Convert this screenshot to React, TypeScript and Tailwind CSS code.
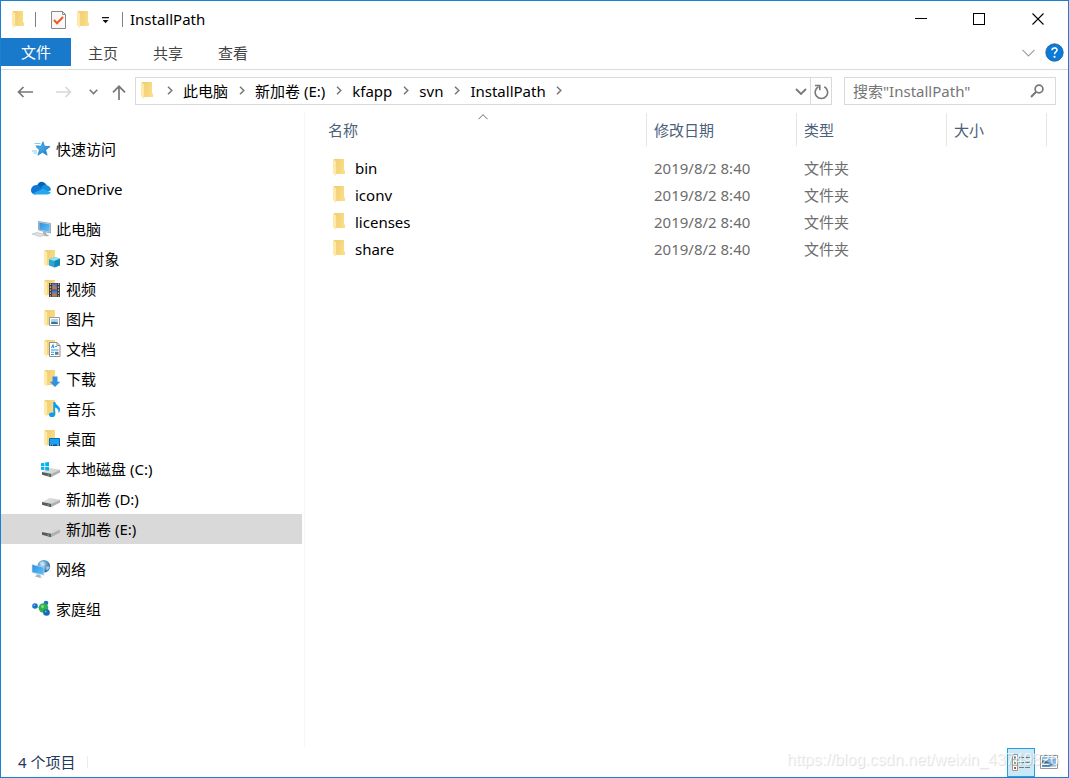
import React, { useState } from "react";

type IconProps = { className?: string };

function FolderShape() {
  return (
    <>
      <path d="M1 0h10v11.5h1V15H3z" fill="url(#folderBack)" />
      <path d="M0 0l3.2 2.4V17L0 14.2z" fill="#ffe9a8" />
    </>
  );
}

function FolderIcon({ className = "" }: IconProps) {
  return (
    <svg className={`shrink-0 ${className}`} width="13" height="17" viewBox="0 0 13 17" aria-hidden="true">
      <FolderShape />
    </svg>
  );
}

function Gradients() {
  return (
    <svg width="0" height="0" className="absolute" aria-hidden="true">
      <defs>
        <linearGradient id="folderBack" x1="0" x2="1" y1="0" y2="0.3">
          <stop offset="0" stopColor="#edca70" />
          <stop offset="1" stopColor="#fbdd85" />
        </linearGradient>
        <linearGradient id="screenBlue" x1="0" x2="1" y1="0" y2="1">
          <stop offset="0" stopColor="#2b8fe0" />
          <stop offset="1" stopColor="#63c4fb" />
        </linearGradient>
        <linearGradient id="starBlue" x1="0" x2="1" y1="0" y2="1">
          <stop offset="0" stopColor="#5cc4fa" />
          <stop offset="1" stopColor="#1578c8" />
        </linearGradient>
        <radialGradient id="globe" cx="0.4" cy="0.35" r="0.7">
          <stop offset="0" stopColor="#bfe0f2" />
          <stop offset="0.5" stopColor="#5b9cc7" />
          <stop offset="1" stopColor="#2a6492" />
        </radialGradient>
        <linearGradient id="driveTop" x1="0" x2="1" y1="0" y2="0">
          <stop offset="0" stopColor="#e2e2e2" />
          <stop offset="1" stopColor="#cfcfcf" />
        </linearGradient>
      </defs>
    </svg>
  );
}

function TreeIcon({ children }: { children: React.ReactNode }) {
  return (
    <svg className="shrink-0" width="22" height="20" viewBox="0 0 22 20" aria-hidden="true">
      {children}
    </svg>
  );
}

function TreeFolder({ children }: { children: React.ReactNode }) {
  return (
    <TreeIcon>
      <g transform="translate(4 1)">
        <FolderShape />
      </g>
      {children}
    </TreeIcon>
  );
}

function Drive() {
  return (
    <>
      <path d="M2 13L9.500 9 20 10.700 11 14.800z" fill="url(#driveTop)" />
      <path d="M2 13l9 1.800v3.500L2 15.800z" fill="#5a5a5a" />
      <path d="M11 14.800l9-4.100v2.800l-9 4.800z" fill="#b0b0b0" />
      <path d="M7.300 15.200l1.800.4v1.300l-1.800-.4z" fill="#35d04a" />
    </>
  );
}

const icons = {
  star: (
    <TreeIcon>
      <path d="M13 2.800l1.500 4.500 5.600.3-4.500 3.300 1.500 5.300-4.600-3-4.600 3 1.600-5.300-3.300-3.200 4.800-.4z" fill="url(#starBlue)" stroke="#1a79c4" strokeWidth="0.7" />
      <path d="M4.500 4.500h6M5.500 6.500h4M2 12h5M3.500 14h3.500" stroke="#7cc4ee" strokeWidth="0.9" />
    </TreeIcon>
  ),
  cloud: (
    <TreeIcon>
      <path d="M6.800 7.300C8 3 12.500 .600 16.200 5.500L12 11z" fill="#0363b8" />
      <path d="M5.200 15.500C2.800 15.500 1 13.700 1 11.500 1 9 3.300 6 6.200 6.100c2.300 0 4.100 2 7.300 4.300z" fill="#0f78d4" />
      <path d="M11 9c1.500-3 5-4.500 6.300-2.500 2.300.6 3.700 2.600 3.700 4.700l-4 1.600z" fill="#1490df" />
      <path d="M3 14.500l9.500-4.700 8.200 3.500c-.5 1.500-1.700 2.200-3.300 2.200H5.500c-1 0-2-.4-2.500-1z" fill="#28a8ea" />
    </TreeIcon>
  ),
  pc: (
    <TreeIcon>
      <path d="M8.500 2.500L20.500 4.500v9.500l-12-3z" fill="#e2e6ea" stroke="#6d7a86" strokeWidth="0.6" />
      <path d="M9.300 3.400l10.400 1.800v7.800L9.300 10.400z" fill="url(#screenBlue)" />
      <path d="M13 12.500l3.500.9v2l3 .8-2.500 1.200-6-1.500 2-.8z" fill="#a9b3bc" />
      <path d="M2 15l5-1.500 8 1.800-4.500 2.400z" fill="#dde1e5" stroke="#b2bac2" strokeWidth="0.6" />
    </TreeIcon>
  ),
  objects: (
    <TreeFolder>
      <path d="M9 10.300l6-2.300 5 1.700v6.500l-5.500 2.300-5.500-2z" fill="#2aa7d0" />
      <path d="M9 10.300l6-2.300 5 1.700-5.500 2.300z" fill="#8fe4f4" />
      <path d="M14.500 12l5.500-2.300v6.500l-5.500 2.300z" fill="#1387b6" />
    </TreeFolder>
  ),
  video: (
    <TreeFolder>
      <path d="M9 4h11v14H9z" fill="#3c3c3c" />
      <path d="M12 4.500h5v6h-5z" fill="#5c6fce" />
      <path d="M12 11.500h5v6h-5z" fill="#3f80d8" />
      <path d="M12 8l2.500-2L17 9v1.500h-5zM12 15l2.500-1.500 2.500 2v2h-5z" fill="#bb784c" />
      <path d="M10.500 4.500v13M18.500 4.500v13" stroke="#d8d8d8" strokeWidth="1.200" strokeDasharray="1.200 1.800" />
    </TreeFolder>
  ),
  picture: (
    <TreeFolder>
      <path d="M9.500 8.500h10v8h-10z" fill="#fff" stroke="#9a9a9a" />
      <path d="M11 10h7v5h-7z" fill="#a8d2f1" />
      <path d="M11 13.500c2-1 4-1 7 .2V15h-7z" fill="#3c7590" />
    </TreeFolder>
  ),
  document: (
    <TreeFolder>
      <path d="M9.500 3.500h7.500l3 3v11H9.500z" fill="#fff" stroke="#8e8e8e" />
      <path d="M17 3.500v3h3" fill="none" stroke="#8e8e8e" />
      <path d="M11.500 9l1.500-3 .8 3M15 7.500h2M11 11h7.500M11 13.200h3M11 15.500h3" fill="none" stroke="#2898d9" strokeWidth="1.100" />
      <path d="M15 12.800h3.500v3H15z" fill="#5c7d96" />
    </TreeFolder>
  ),
  download: (
    <TreeFolder>
      <path d="M12.500 7.500h5v5.200h2.800L15 18l-5.300-5.300h2.800z" fill="#3391e4" />
    </TreeFolder>
  ),
  music: (
    <TreeFolder>
      <ellipse cx="12" cy="15.700" rx="3" ry="2.300" fill="#0a9bf2" />
      <path d="M13.300 3h1.900c.4 3 4.800 4 4.800 7.500 0 1.700-.8 3-1.500 3.500.5-3-.9-4.500-3.400-5.500v7h-1.800z" fill="#0a9bf2" />
    </TreeFolder>
  ),
  desktop: (
    <TreeFolder>
      <path d="M9.500 9.500h10v7h-10z" fill="#1ba1f3" stroke="#0b68b5" />
      <path d="M9 15.500h11v1.500H9z" fill="#0c4e89" />
      <path d="M10 16h1M12 16h1M17 16h2" stroke="#d8efff" strokeWidth="0.8" />
    </TreeFolder>
  ),
  system: (
    <TreeIcon>
      <Drive />
      <path d="M1 4.200l3.400-.5v3.300H1zM5.200 3.600L9 3v4H5.200zM1 7.800h3.400v3.300L1 10.700zM5.200 7.800H9v4l-3.800-.6z" fill="#00b4ef" />
    </TreeIcon>
  ),
  drive: (
    <TreeIcon>
      <Drive />
    </TreeIcon>
  ),
  network: (
    <TreeIcon>
      <circle cx="13.800" cy="7.200" r="6.300" fill="url(#globe)" />
      <path d="M9.500 4c2-2 4-2 5 0s-1 3-2 4zM16 8c2-1 3.500-1 3.500 0s-1.500 3-3 3.500z" fill="#cfe6f2" opacity="0.7" />
      <path d="M2 5.500l12 2.800v8L2 13.500z" fill="url(#screenBlue)" stroke="#d3e3ee" strokeWidth="0.600" />
      <path d="M6.500 15l4 1v1.500l2 .8-3 .5-5-1.500 2-.8z" fill="#a7b4be" />
    </TreeIcon>
  ),
  homegroup: (
    <TreeIcon>
      <path d="M5 7l8 3 3-6M13 10l3 5" stroke="#a7c9dd" strokeWidth="1.200" fill="none" />
      <circle cx="5" cy="7" r="2.800" fill="#1b74c2" />
      <circle cx="16" cy="4" r="2.300" fill="#1b74c2" />
      <circle cx="13.500" cy="9" r="4.800" fill="#2fb44a" />
      <circle cx="16.500" cy="13.500" r="3.300" fill="#1767b6" />
      <circle cx="12.500" cy="7.500" r="1.500" fill="#7fdc8c" />
      <circle cx="4.300" cy="6.300" r="0.900" fill="#6fb5ea" />
      <circle cx="15.700" cy="12.500" r="1" fill="#6fb5ea" />
    </TreeIcon>
  ),
};

type Node = { label: string; icon: keyof typeof icons; children?: Node[] };

const tree: Node[] = [
  { label: "快速访问", icon: "star" },
  { label: "OneDrive", icon: "cloud" },
  {
    label: "此电脑",
    icon: "pc",
    children: [
      { label: "3D 对象", icon: "objects" },
      { label: "视频", icon: "video" },
      { label: "图片", icon: "picture" },
      { label: "文档", icon: "document" },
      { label: "下载", icon: "download" },
      { label: "音乐", icon: "music" },
      { label: "桌面", icon: "desktop" },
      { label: "本地磁盘 (C:)", icon: "system" },
      { label: "新加卷 (D:)", icon: "drive" },
      { label: "新加卷 (E:)", icon: "drive" },
    ],
  },
  { label: "网络", icon: "network" },
  { label: "家庭组", icon: "homegroup" },
];

const crumbs = ["此电脑", "新加卷 (E:)", "kfapp", "svn", "InstallPath"];
const files = ["bin", "iconv", "licenses", "share"];

function TitleBar() {
  return (
    <header className="flex h-[37px] items-center pl-[11px]">
      <FolderIcon />
      <span className="ml-[10px] h-[15px] w-px bg-[#808080]" />
      <button aria-label="属性" className="ml-[15px]">
        <svg width="15" height="18" viewBox="0 0 15 18" aria-hidden="true">
          <path d="M.5.500h11l3 3v14H.5z" fill="#f8f8f8" stroke="#8a8a8a" />
          <path d="M11.500.500v3h3" fill="none" stroke="#8a8a8a" />
          <path d="M3 9l3 3.200L12 6" fill="none" stroke="#f1581c" strokeWidth="2" />
        </svg>
      </button>
      <button aria-label="新建文件夹" className="ml-[11px]">
        <FolderIcon />
      </button>
      <button aria-label="自定义快速访问工具栏" className="ml-[11px] pt-[2px]">
        <svg width="9" height="7" viewBox="0 0 9 7" aria-hidden="true">
          <path d="M1 0h7v1.200H1zM1.500 3h6l-3 3.200z" fill="#111" />
        </svg>
      </button>
      <span className="ml-3 h-[15px] w-px bg-[#808080]" />
      <h1 className="ml-[7px] flex-1 pb-[2px]">InstallPath</h1>
      <button aria-label="最小化" className="flex h-full w-[58px] items-center justify-center">
        <svg width="13" height="13" viewBox="0 0 13 13" shapeRendering="crispEdges" aria-hidden="true">
          <path d="M0 5.500h12" stroke="#000" />
        </svg>
      </button>
      <button aria-label="最大化" className="flex h-full w-[58px] items-center justify-center">
        <svg width="13" height="13" viewBox="0 0 13 13" shapeRendering="crispEdges" aria-hidden="true">
          <path d="M.5.500h11v11H.5z" fill="none" stroke="#000" />
        </svg>
      </button>
      <button aria-label="关闭" className="flex h-full w-[60px] items-center justify-center">
        <svg width="13" height="13" viewBox="0 0 13 13" aria-hidden="true">
          <path d="M.5.500l11 11M11.500.500l-11 11" stroke="#000" strokeWidth="1.100" />
        </svg>
      </button>
    </header>
  );
}

function RibbonTabs() {
  return (
    <nav className="flex border-b border-[#dadbdc] pb-[3px]">
      <button className="h-7 w-[70px] bg-[#1979ca] text-white">文件</button>
      {["主页", "共享", "查看"].map((tab) => (
        <button key={tab} className="h-7 w-[65px] pt-px pr-px text-[#444]">
          {tab}
        </button>
      ))}
      <button aria-label="展开功能区" className="mt-px ml-auto flex w-6 items-center justify-center">
        <svg width="13" height="8" viewBox="0 0 13 8" aria-hidden="true">
          <path d="M.5.800l6 6 6-6" fill="none" stroke="#a0a0a0" strokeWidth="1.200" />
        </svg>
      </button>
      <button aria-label="帮助" className="mt-px mr-1 ml-[5px]">
        <svg width="19" height="19" viewBox="0 0 19 19" aria-hidden="true">
          <circle cx="9.500" cy="9.500" r="8.700" fill="#0b7ad8" stroke="#1b5c9b" strokeWidth="0.800" />
          <path d="M7 7.200C7 4.200 12 4.200 12 7c0 2-2.500 2-2.500 4.300" fill="none" stroke="#fff" strokeWidth="1.600" />
          <circle cx="9.500" cy="13.800" r="1.100" fill="#fff" />
        </svg>
      </button>
    </nav>
  );
}

function Chevron() {
  return (
    <svg width="6" height="9" viewBox="0 0 6 9" aria-hidden="true">
      <path d="M1 .700l3.800 3.800L1 8.300" fill="none" stroke="#777" strokeWidth="1.500" />
    </svg>
  );
}

function ArrowLeft({ color, flip }: { color: string; flip?: boolean }) {
  return (
    <svg width="16" height="12" viewBox="0 0 16 12" aria-hidden="true">
      <path
        d={flip ? "M0 6h14.500M9.500 1l5 5-5 5" : "M16 6H1.500M6.500 1l-5 5 5 5"}
        fill="none"
        stroke={color}
        strokeWidth="1.700"
      />
    </svg>
  );
}

function AddressRow() {
  return (
    <div className="flex pt-[7px] pr-3 pb-2 pl-4">
      <div className="flex h-7 w-[118px] items-center pt-[2px]">
        <button aria-label="后退"><ArrowLeft color="#777" /></button>
        <button aria-label="前进" className="ml-[23px]"><ArrowLeft color="#d8d8d8" flip /></button>
        <button aria-label="最近浏览的位置" className="ml-[17px]">
          <svg width="9" height="6" viewBox="0 0 9 6" aria-hidden="true">
            <path d="M.700.800l3.800 3.800L8.300.800" fill="none" stroke="#777" strokeWidth="1.500" />
          </svg>
        </button>
        <button aria-label="上移" className="ml-[14px]">
          <svg width="14" height="15" viewBox="0 0 14 15" aria-hidden="true">
            <path d="M7 15V1.500M1 7.300l6-6 6 6" fill="none" stroke="#777" strokeWidth="1.700" />
          </svg>
        </button>
      </div>
      <div className="flex h-7 flex-1 border border-[#d9d9d9]">
        <div className="flex flex-1 items-center pl-[5px] pb-px">
          <FolderIcon />
          <span className="ml-[2px] flex w-[27px] justify-center"><Chevron /></span>
          {crumbs.map((crumb) => (
            <React.Fragment key={crumb}>
              <a href="#" className="whitespace-nowrap">{crumb}</a>
              <span className="flex w-[27px] justify-center"><Chevron /></span>
            </React.Fragment>
          ))}
        </div>
        <button aria-label="以前的位置" className="flex w-[18px] items-center justify-center pt-[2px]">
          <svg width="12" height="8" viewBox="0 0 12 8" aria-hidden="true">
            <path d="M1 1l5 5 5-5" fill="none" stroke="#777" strokeWidth="1.800" />
          </svg>
        </button>
        <button aria-label="刷新" className="flex w-[21px] items-center justify-center border-l border-[#d9d9d9] pt-[2px]">
          <svg width="15" height="16" viewBox="0 0 15 16" aria-hidden="true">
            <path d="M10.300 2.800a6.200 6.200 0 1 1-5.800 0" fill="none" stroke="#777" strokeWidth="1.600" />
            <path d="M1 1.500h4.800v4.800" fill="none" stroke="#777" strokeWidth="1.600" />
          </svg>
        </button>
      </div>
      <label className="ml-3 flex h-7 w-[212px] items-center border border-[#d9d9d9] pr-[11px] pl-2">
        <input
          type="search"
          aria-label="搜索"
          placeholder={'搜索"InstallPath"'}
          className="min-w-0 flex-1 outline-none placeholder:text-[#767676]"
        />
        <svg width="14" height="14" viewBox="0 0 14 14" aria-hidden="true">
          <circle cx="9" cy="5" r="3.900" fill="none" stroke="#777" strokeWidth="1.700" />
          <path d="M6.200 7.800L1 13" stroke="#777" strokeWidth="2" />
        </svg>
      </label>
    </div>
  );
}

function TreeRow({ node, nested, selected, onSelect }: { node: Node; nested?: boolean; selected: boolean; onSelect: (label: string) => void }) {
  return (
    <button
      onClick={() => onSelect(node.label)}
      className={`flex h-[30px] w-full items-center gap-1 text-left ${nested ? "pl-[39px]" : "pl-[29px]"} ${selected ? "bg-[#d9d9d9]" : ""}`}
    >
      {icons[node.icon]}
      <span>{node.label}</span>
    </button>
  );
}

function Sidebar() {
  const [selected, setSelected] = useState("新加卷 (E:)");
  return (
    <aside className="w-[304px] shrink-0 border-r border-[#f5f5f5] pt-[21px] pr-[2px]">
      <ul className="flex flex-col gap-[10px]">
        {tree.map((node) => (
          <li key={node.label}>
            <TreeRow node={node} selected={selected === node.label} onSelect={setSelected} />
            {node.children && (
              <ul>
                {node.children.map((child) => (
                  <li key={child.label}>
                    <TreeRow node={child} nested selected={selected === child.label} onSelect={setSelected} />
                  </li>
                ))}
              </ul>
            )}
          </li>
        ))}
      </ul>
    </aside>
  );
}

function FileTable() {
  return (
    <main className="flex-1 pr-[21px] pl-[15px]">
      <table className="w-full table-fixed border-collapse text-left">
        <thead className="text-[#4c607a]">
          <tr>
            <th className="p-0 pb-2 font-normal">
              <div className="relative flex h-[33px] items-center border-r border-[#e5e5e5] pl-2">
                名称
                <svg className="absolute top-px left-1/2 -translate-x-1/2" width="10" height="6" viewBox="0 0 10 6" aria-hidden="true">
                  <path d="M.500 5.200L5 .700l4.500 4.500" fill="none" stroke="#666" />
                </svg>
              </div>
            </th>
            <th className="w-[150px] p-0 pb-2 font-normal">
              <div className="flex h-[33px] items-center border-r border-[#e5e5e5] pl-[7px]">修改日期</div>
            </th>
            <th className="w-[150px] p-0 pb-2 font-normal">
              <div className="flex h-[33px] items-center border-r border-[#e5e5e5] pl-[7px]">类型</div>
            </th>
            <th className="w-[100px] p-0 pb-2 font-normal">
              <div className="flex h-[33px] items-center border-r border-[#e5e5e5] pl-[7px]">大小</div>
            </th>
          </tr>
        </thead>
        <tbody>
          {files.map((name) => (
            <tr key={name} className="h-[27px] text-[#6d6d6d]">
              <td className="p-0 pl-[13px] text-black">
                <div className="flex items-center gap-[9px]">
                  <FolderIcon />
                  {name}
                </div>
              </td>
              <td className="p-0 pl-[7px]">2019/8/2 8:40</td>
              <td className="p-0 pl-[7px]">文件夹</td>
              <td className="p-0" />
            </tr>
          ))}
        </tbody>
      </table>
    </main>
  );
}

function StatusBar() {
  return (
    <footer className="relative flex h-[30px] items-center pr-[10px] pl-[17px] text-[#1e395b]">
      <span>4 个项目</span>
      <span className="ml-3 h-3 w-px bg-[#ececec]" />
      <button aria-label="详细信息" className="ml-auto flex h-[29px] w-7 items-center justify-center self-end border border-[#26a0da] bg-[#cbe8f6]">
        <svg width="18" height="18" viewBox="0 0 18 18" aria-hidden="true">
          <path d="M.5.500h5v16h-5zM.5 5.800h5M.5 11.200h5" fill="#fff" stroke="#999" />
          <path d="M2 2.500h2v2H2z" fill="#4d87b8" />
          <path d="M2 7.700h2v2H2z" fill="#62a33d" />
          <path d="M2 13h2v2H2z" fill="#d14d28" />
          <path d="M7 3.500h5M13 3.500h5M7 8.500h5M13 8.500h5M7 13.500h5M13 13.500h5" stroke="#7a7a7a" />
        </svg>
      </button>
      <button aria-label="大缩略图" className="ml-[5px]">
        <svg width="18" height="14" viewBox="0 0 18 14" aria-hidden="true">
          <path d="M.5.500h17v13H.5z" fill="#fff" stroke="#999" />
          <path d="M2 2h14v10H2z" fill="#8dbcee" />
          <path d="M3 4h5v1H3zM9 3h4v1H9z" fill="#e2f0fc" />
          <path d="M2 5.500l4 .5 5 2.500H2z" fill="#47706c" />
          <path d="M2 8.500h14V12H2z" fill="#5c93c6" />
          <path d="M9 12l7-3v3zM2 9h6v1H2z" fill="#bfd9ea" />
        </svg>
      </button>
      <span className="pointer-events-none absolute right-[9px] bottom-[7px] [font-family:'Liberation_Sans',Arial,sans-serif] text-[16px] leading-5 text-white/70 [text-shadow:1px_1px_1px_rgba(0,0,0,0.14)]">
        https://blog.csdn.net/weixin_43749826
      </span>
    </footer>
  );
}

export default function App() {
  return (
    <div className="flex min-h-screen flex-col border border-[#1a80d2] bg-white [font-family:'Noto_Sans','Noto_Sans_CJK_SC',sans-serif] text-[15px] leading-5 text-black">
      <Gradients />
      <TitleBar />
      <RibbonTabs />
      <AddressRow />
      <div className="flex flex-1">
        <Sidebar />
        <FileTable />
      </div>
      <StatusBar />
    </div>
  );
}
